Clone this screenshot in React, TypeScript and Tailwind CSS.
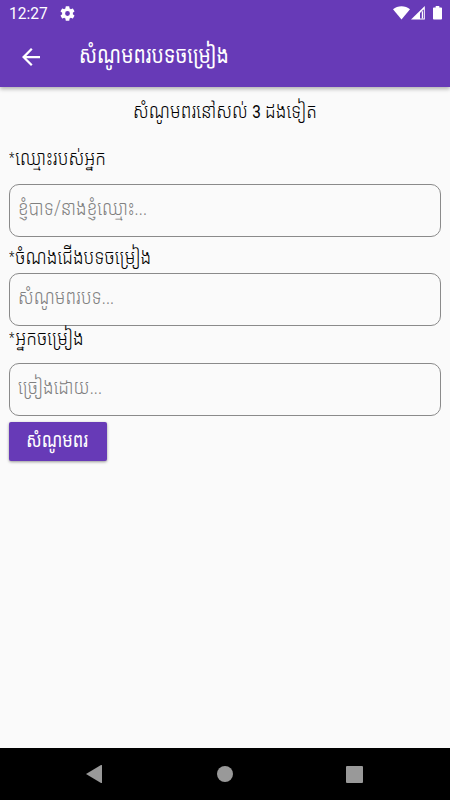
import React from 'react';

interface FieldProps {
  label: string;
  placeholder: string;
  className: string;
  labelClassName: string;
}

const Field: React.FC<FieldProps> = ({ label, placeholder, className, labelClassName }) => (
  <div className={className}>
    <label className={`block h-6 origin-left scale-x-[0.85] whitespace-nowrap text-[20.5px] font-light leading-[23px] text-black ${labelClassName}`}>
      <span className="mr-[1px] align-[2px] text-[15px] leading-none">*</span>
      {label}
    </label>
    <div className="h-[52.5px] rounded-[10px] border border-[#8a8a8a] px-2">
      <input
        type="text"
        placeholder={placeholder}
        className="block h-full w-full origin-left scale-x-[0.845] bg-transparent pb-[5px] text-[20.5px] font-light text-black outline-none placeholder:text-[#808080]"
      />
    </div>
  </div>
);

const StatusBar: React.FC = () => (
  <div className="flex h-[27px] items-center justify-between pl-[9px] pr-[8px] text-white">
    <div className="flex items-center gap-[12px]">
      <span className="origin-left scale-x-[0.97] font-['Roboto',sans-serif] text-[16px] font-normal leading-5">12:27</span>
      <svg className="-ml-[1px]" width="15" height="15" viewBox="2 2 20 20" fill="currentColor">
        <path d="M19.14 12.94c.04-.3.06-.61.06-.94s-.02-.64-.07-.94l2.03-1.58a.49.49 0 0 0 .12-.61l-1.92-3.32a.49.49 0 0 0-.59-.22l-2.39.96a7 7 0 0 0-1.62-.94l-.36-2.54A.48.48 0 0 0 13.92 2.4h-3.84a.48.48 0 0 0-.48.41l-.36 2.54c-.59.24-1.13.57-1.62.94l-2.39-.96a.49.49 0 0 0-.59.22L2.74 8.87a.48.48 0 0 0 .12.61l2.03 1.58a6 6 0 0 0 0 1.88l-2.03 1.58a.49.49 0 0 0-.12.61l1.92 3.32c.12.22.37.29.59.22l2.39-.96c.5.38 1.03.7 1.62.94l.36 2.54c.05.24.24.41.48.41h3.84c.24 0 .44-.17.48-.41l.36-2.54a7 7 0 0 0 1.62-.94l2.39.96c.22.08.47 0 .59-.22l1.92-3.32a.48.48 0 0 0-.12-.61zM12 15.2a3.2 3.2 0 1 1 0-6.4 3.2 3.2 0 0 1 0 6.4z" />
      </svg>
    </div>
    <div className="flex items-center pb-[1px]">
      <svg width="17" height="14" viewBox="0 0 17 14" fill="currentColor">
        <path d="M0 3.3C4.6-.9 12.4-.9 17 3.3L8.5 13.5z" />
      </svg>
      <svg className="ml-[1px]" width="14" height="14" viewBox="0 0 14 14">
        <path d="M0 13.5 13.8 0v13.5z" fill="#ffffff" />
        <path d="M9 7 12.8 3.2v9.3H9z" fill="#673ab7" />
        <path d="M10.8 5.2h1.2v7.3h-1.2z" fill="#ffffff" />
      </svg>
      <svg className="ml-[8px]" width="9" height="14" viewBox="0 0 9 14" fill="currentColor">
        <path d="M2.7 0h3.6v1.4h1.9c.5 0 .8.3.8.8v10.5c0 .5-.3.8-.8.8H.8c-.5 0-.8-.3-.8-.8V2.2c0-.5.3-.8.8-.8h1.9z" />
      </svg>
    </div>
  </div>
);

const AppBar: React.FC = () => (
  <div className="flex h-[60px] items-center pb-[1px] pl-[22px] text-white">
    <svg width="18" height="18" viewBox="4 4 16 16" fill="currentColor">
      <path d="M20 11H7.83l5.59-5.59L12 4l-8 8 8 8 1.41-1.41L7.83 13H20v-2z" />
    </svg>
    <h1 className="mb-[1px] ml-[39px] origin-left scale-x-[0.845] whitespace-nowrap text-[23px] font-normal leading-8">សំណូមពរបទចម្រៀង</h1>
  </div>
);

const NavigationBar: React.FC = () => (
  <nav className="flex h-[52px] items-center justify-between bg-black pl-[86px] pr-[87px] text-[#999999]">
    <svg width="16" height="18" viewBox="0 0 16 18" fill="currentColor">
      <path d="M0 9 15 0q1-.3 1 .6v16.8q0 .9-1 .6z" />
    </svg>
    <div className="ml-[1px] h-4 w-4 rounded-full bg-[#999999]" />
    <div className="h-[17px] w-[17px] rounded-[1px] bg-[#999999]" />
  </nav>
);

export default function App() {
  return (
    <div className="flex h-[800px] w-[450px] flex-col overflow-hidden bg-[#fafafa] font-['Roboto','Noto_Sans_Khmer',sans-serif]">
      <header className="z-10 h-[87px] bg-[#673ab7] shadow-[0_2px_4px_rgba(0,0,0,0.3)]">
        <StatusBar />
        <AppBar />
      </header>
      <main className="flex-1 px-[9px]">
        <p className="mt-[12px] h-6 scale-x-[0.85] whitespace-nowrap text-center text-[20.5px] font-light leading-6 text-black">
          សំណូមពរនៅសល់ <span className="text-[18px] font-normal leading-none">3</span> ដងទៀត
        </p>
        <Field className="mt-[24px]" labelClassName="mb-[13px]" label="ឈ្មោះរបស់អ្នក" placeholder="ខ្ញុំបាទ/នាងខ្ញុំឈ្មោះ..." />
        <Field className="mt-[9.5px]" labelClassName="mb-[3px]" label="ចំណងជើងបទចម្រៀង" placeholder="សំណូមពរបទ..." />
        <Field className="mt-[1.5px]" labelClassName="mb-[12px]" label="អ្នកចម្រៀង" placeholder="ច្រៀងដោយ..." />
        <button className="mt-[6.5px] block h-[39px] w-[98px] whitespace-nowrap rounded-[2px] bg-[#673ab7] pb-[3px] pr-[1px] text-[20.5px] font-normal text-white shadow-[0_1px_3px_rgba(0,0,0,0.4)]">
          <span className="inline-block scale-x-[0.81]">សំណូមពរ</span>
        </button>
      </main>
      <NavigationBar />
    </div>
  );
}
